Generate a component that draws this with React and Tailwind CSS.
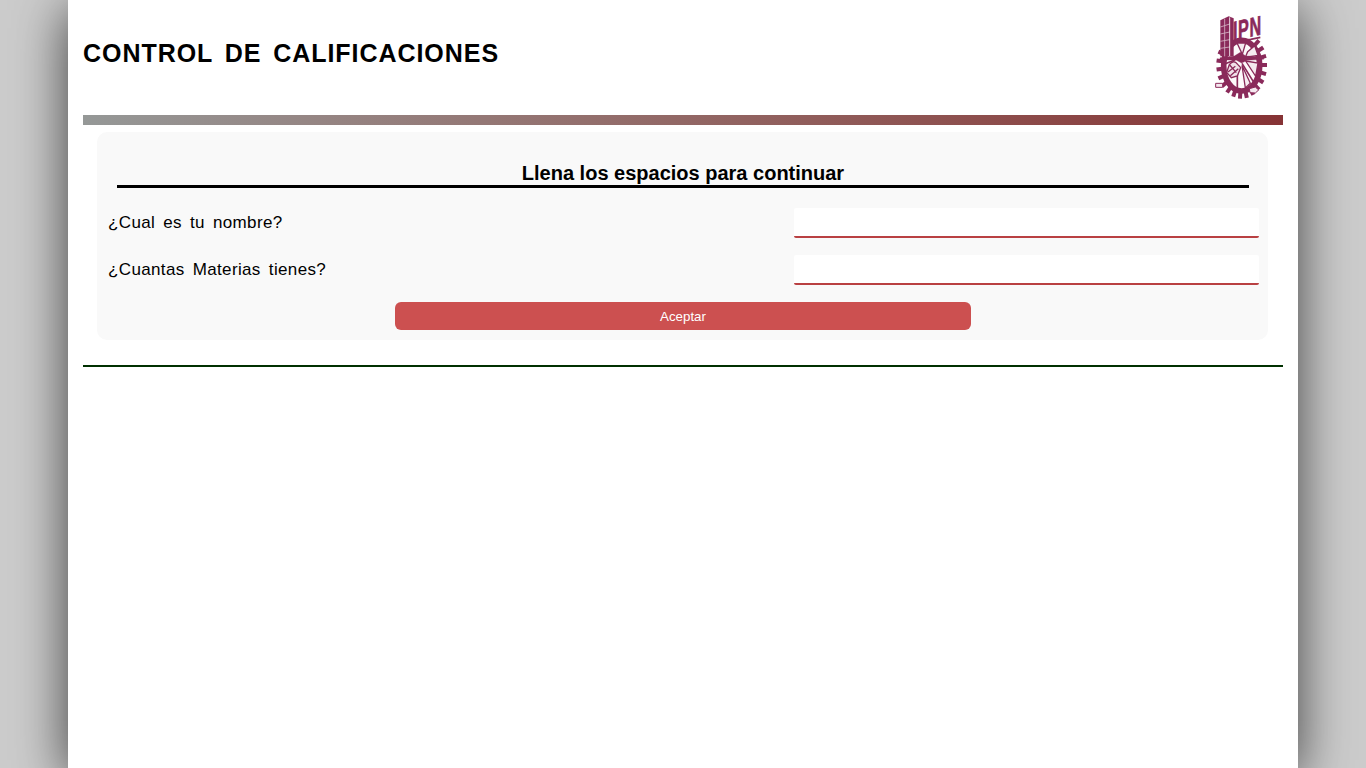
const teeth = Array.from({ length: 23 }, (_, i) => (i * 360) / 23)
  .filter((a) => a < 205 || a > 310);

function Logo() {
  return (
    <svg className="h-[100px] w-20" viewBox="0 0 240 300" role="img" aria-label="IPN">
      <g fill="#8a2a5a" stroke="#8a2a5a">
        {teeth.map((a) => {
          const r = (a * Math.PI) / 180;
          const c = Math.cos(r);
          const s = Math.sin(r);
          return (
            <line
              key={a}
              x1={125 + 58 * c}
              y1={180 + 82 * s}
              x2={125 + 76 * c}
              y2={180 + 101 * s}
              strokeWidth="12"
            />
          );
        })}
        <ellipse cx="125" cy="182" rx="54" ry="76" fill="#fdf9fb" strokeWidth="17" />
        <path d="M111 114 H137 L127 148 Z M143 140 L164 122 L174 151 L136 157 Z M137 168 L174 174 L167 214 Z M126 181 L151 235 L136 249 Z" fill="#f5eaf0" strokeWidth="4" />
        <path d="M112 180 V249 M126 175 L160 230 M76 176 L106 164" fill="none" strokeWidth="5" />
        <path d="M60 158 L103 153 L121 142 L137 153 L191 155 V163 L142 166 L125 174 L108 165 L60 165 Z" strokeWidth="1" />
        <path d="M88 179 Q101 162 113 178 L122 188 L112 213 L94 218 L80 202 Z" fill="#f1e1e9" strokeWidth="4" />
        <path d="M84 201 L106 184 M91 212 L115 191 M89 180 L109 203" strokeWidth="4" />
        <path d="M61 46 L86 34 L101 40 V154 H61 Z" stroke="none" />
        <path d="M61 66 L89 57 M61 87 L89 81 M61 109 L89 104 M61 130 L89 126 M74 41 V154" fill="none" stroke="#d5b3c4" strokeWidth="2.5" />
        <path d="M89 37 V153" fill="none" stroke="#fff" strokeWidth="2.5" />
        <path d="M99 108 L152 103 L181 97" fill="none" strokeWidth="5" />
        <path d="M47 235 H68 V247 H47 Z M148 251 L166 246 L176 255 L166 264 L150 263 Z" fill="#f5e8ef" strokeWidth="3" />
        <text
          transform="matrix(0.6 -0.13 0 1 99 107)"
          fontFamily="Liberation Sans, Arial, sans-serif"
          fontSize="81"
          fontWeight="bold"
          letterSpacing="3"
          strokeWidth="2"
        >
          IPN
        </text>
      </g>
    </svg>
  );
}

function Field({ id, label }) {
  return (
    <div className="flex h-[47px] items-start justify-between">
      <label
        htmlFor={id}
        className="mt-[3px] text-[17px] leading-6 tracking-[0.36px] [word-spacing:3px]"
      >
        {label}
      </label>
      <input
        id={id}
        className="h-[30px] w-[465px] rounded-[2px] border-b-2 border-[#b94042] bg-white px-2 outline-none"
      />
    </div>
  );
}

export default function App() {
  return (
    <div className="h-screen overflow-hidden bg-[#ccc] font-['Liberation_Sans',Arial,sans-serif] text-black">
      <div className="mx-auto h-full w-[1230px] bg-white px-[15px] shadow-[0_10px_50px_rgba(0,0,0,0.7)]">
        <header className="flex h-[115px] items-start justify-between pt-[5px] pr-[3px]">
          <h1 className="mt-[33px] text-[25px] leading-[30px] font-bold tracking-[0.95px] whitespace-nowrap [word-spacing:4px]">
            CONTROL DE CALIFICACIONES
          </h1>
          <Logo />
        </header>
        <div className="h-[10px] bg-linear-to-r from-[#959897] to-[#863335]" />
        <main className="mx-[14px] mt-[7px] h-[208px] w-[1171px] rounded-[10px] bg-[#f9f9f9] pt-[29px] pr-[9px] pl-[11px]">
          <h2 className="mr-[10px] mb-5 ml-[9px] h-[27px] w-[1132px] border-b-3 border-black text-center text-[20px] leading-6 font-bold">
            Llena los espacios para continuar
          </h2>
          <form onSubmit={(e) => e.preventDefault()}>
            <Field id="nombre" label="¿Cual es tu nombre?" />
            <Field id="materias" label="¿Cuantas Materias tienes?" />
            <button className="ml-[287px] block h-7 w-[576px] rounded-md bg-[#cc5050] pt-px text-[13.333px] text-white">
              Aceptar
            </button>
          </form>
        </main>
        <div className="mt-[25px] h-[2px] bg-[#003000]" />
      </div>
    </div>
  );
}
